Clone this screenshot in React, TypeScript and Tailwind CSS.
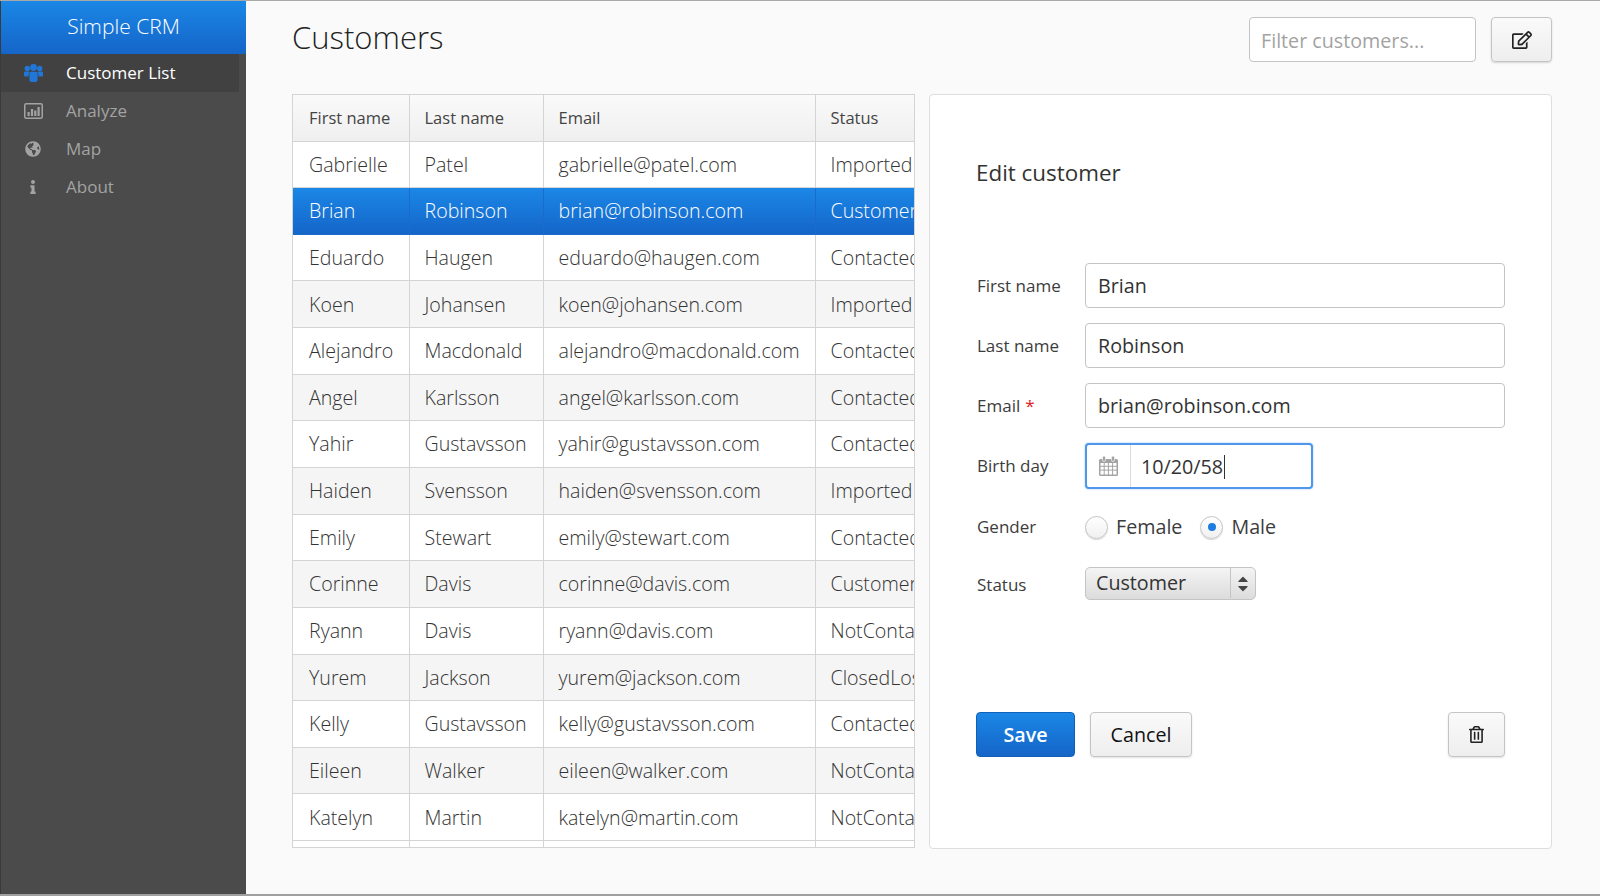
import { FaGlobeAmericas, FaInfo, FaRegEdit, FaRegTrashAlt, FaCaretUp, FaCaretDown } from 'react-icons/fa';

const font = "font-['Open_Sans','Noto_Sans',sans-serif]";

const customers = [
  ['Gabrielle', 'Patel', 'gabrielle@patel.com', 'Imported'],
  ['Brian', 'Robinson', 'brian@robinson.com', 'Customer'],
  ['Eduardo', 'Haugen', 'eduardo@haugen.com', 'Contacted'],
  ['Koen', 'Johansen', 'koen@johansen.com', 'Imported'],
  ['Alejandro', 'Macdonald', 'alejandro@macdonald.com', 'Contacted'],
  ['Angel', 'Karlsson', 'angel@karlsson.com', 'Contacted'],
  ['Yahir', 'Gustavsson', 'yahir@gustavsson.com', 'Contacted'],
  ['Haiden', 'Svensson', 'haiden@svensson.com', 'Imported'],
  ['Emily', 'Stewart', 'emily@stewart.com', 'Contacted'],
  ['Corinne', 'Davis', 'corinne@davis.com', 'Customer'],
  ['Ryann', 'Davis', 'ryann@davis.com', 'NotContacted'],
  ['Yurem', 'Jackson', 'yurem@jackson.com', 'ClosedLost'],
  ['Kelly', 'Gustavsson', 'kelly@gustavsson.com', 'Contacted'],
  ['Eileen', 'Walker', 'eileen@walker.com', 'NotContacted'],
  ['Katelyn', 'Martin', 'katelyn@martin.com', 'NotContacted'],
];

function GroupIcon() {
  return (
    <svg width="19" height="18" viewBox="0 0 19 18" fill="currentColor">
      <circle cx="3.300" cy="4.500" r="2.700" />
      <circle cx="15.700" cy="4.500" r="2.700" />
      <circle cx="9.500" cy="3.500" r="3.400" />
      <path d="M0 8.800C0 8 .6 7.500 1.400 7.500h3.200c.5 0 .9.200 1.200.500C5 8.800 4.600 10 4.600 11.300v1.200H1.400C.6 12.500 0 12 0 11.200z" />
      <path d="M19 8.800c0-.8-.6-1.300-1.400-1.300h-3.200c-.5 0-.9.200-1.200.500.8.800 1.200 2 1.200 3.300v1.200h3.200c.8 0 1.400-.5 1.400-1.300z" />
      <path d="M7.300 7.800h4.400c1.200 0 1.900.8 1.900 2v6.300c0 1-.8 1.900-1.900 1.900H7.300c-1.100 0-1.900-.9-1.900-1.900V9.800c0-1.200.7-2 1.900-2z" />
    </svg>
  );
}

function ChartIcon() {
  return (
    <svg width="19" height="16" viewBox="0 0 19 16" fill="currentColor">
      <rect x="0.750" y="0.750" width="17.500" height="14.500" rx="1.500" fill="none" stroke="currentColor" strokeWidth="1.500" />
      <rect x="3.500" y="9" width="2.200" height="4" />
      <rect x="6.900" y="6" width="2.200" height="7" />
      <rect x="10.200" y="7.500" width="2.200" height="5.500" />
      <rect x="13.500" y="4" width="2.200" height="9" />
    </svg>
  );
}

function CalendarIcon() {
  return (
    <svg width="19" height="20" viewBox="0 0 19 20" fill="#a3a3a3">
      <path d="M1.500 3h16a1.500 1.500 0 0 1 1.500 1.500V18.500a1.500 1.500 0 0 1-1.500 1.500h-16A1.500 1.500 0 0 1 0 18.500V4.500A1.500 1.500 0 0 1 1.500 3z" />
      <rect x="1.500" y="7" width="3.200" height="2.800" fill="#fff" />
      <rect x="5.700" y="7" width="3.200" height="2.800" fill="#fff" />
      <rect x="9.900" y="7" width="3.200" height="2.800" fill="#fff" />
      <rect x="14.100" y="7" width="3.400" height="2.800" fill="#fff" />
      <rect x="1.500" y="10.800" width="3.200" height="2.800" fill="#fff" />
      <rect x="5.700" y="10.800" width="3.200" height="2.800" fill="#fff" />
      <rect x="9.900" y="10.800" width="3.200" height="2.800" fill="#fff" />
      <rect x="14.100" y="10.800" width="3.400" height="2.800" fill="#fff" />
      <rect x="1.500" y="14.600" width="3.200" height="3.900" fill="#fff" />
      <rect x="5.700" y="14.600" width="3.200" height="3.900" fill="#fff" />
      <rect x="9.900" y="14.600" width="3.200" height="3.900" fill="#fff" />
      <rect x="14.100" y="14.600" width="3.400" height="3.900" fill="#fff" />
      <rect x="3.500" y="0" width="3" height="5.500" rx="1.500" stroke="#fff" strokeWidth="0.600" />
      <rect x="12.500" y="0" width="3" height="5.500" rx="1.500" stroke="#fff" strokeWidth="0.600" />
    </svg>
  );
}

function NavItem({ icon, label, active }: { icon: React.ReactNode; label: string; active?: boolean }) {
  return (
    <div className={`mr-[7px] flex h-[38px] items-center ${active ? 'bg-[#414141] font-medium text-white' : 'text-[#a3a3a3]'}`}>
      <span className={`flex w-[65px] shrink-0 items-center justify-center pr-[1px] ${active ? 'text-[#2176d6]' : 'text-[#a3a3a3]'}`}>{icon}</span>
      <span className="text-[17px]">{label}</span>
    </div>
  );
}

function Field({ label, value, required }: { label: string; value: string; required?: boolean }) {
  return (
    <div className="flex h-[45px] items-center">
      <label className="w-[109px] pl-[1px] text-[17px] text-[#3c3c3c]">
        {label}
        {required && <span className="ml-[5px] text-[#e02020]">*</span>}
      </label>
      <div className="flex h-[45px] flex-1 items-center rounded-[4px] border border-[#c4c4c4] bg-white px-[12px] text-[19.7px] text-[#333]">{value}</div>
    </div>
  );
}

function Radio({ label, checked }: { label: string; checked?: boolean }) {
  return (
    <div className="flex items-center gap-[8px]">
      <span className="flex h-[23px] w-[23px] items-center justify-center rounded-full border border-[#c4c4c4] bg-gradient-to-b from-white to-[#f0f0f0] shadow-[0_1px_1px_rgba(0,0,0,0.15)]">
        {checked && <span className="h-[8px] w-[8px] rounded-full bg-[#1b7de0]" />}
      </span>
      <span className="text-[19.7px] text-[#3c3c3c]">{label}</span>
    </div>
  );
}

export default function App() {
  return (
    <div className={`${font} flex h-[896px] w-[1600px] overflow-hidden border-t border-b-2 border-t-[#a8a8a8] border-b-[#a0a0a0] bg-[#fafafa]`}>
      <aside className="w-[246px] shrink-0 border-l border-[#3a3a3a] bg-[#4b4b4b]">
        <div className="flex h-[53px] items-center justify-center bg-gradient-to-b from-[#1b87e6] to-[#1565c8] pb-[1px] text-[21px] font-light text-white">Simple CRM</div>
        <NavItem active icon={<GroupIcon />} label="Customer List" />
        <NavItem icon={<ChartIcon />} label="Analyze" />
        <NavItem icon={<FaGlobeAmericas size={16} />} label="Map" />
        <NavItem icon={<FaInfo size={14} />} label="About" />
      </aside>

      <main className="flex min-w-0 flex-1 flex-col pt-[16px] pr-[48px] pl-[46px]">
        <div className="flex h-[46px] items-start">
          <h1 className="flex-1 text-[31px] leading-[40px] font-light text-[#222]">Customers</h1>
          <div className="flex h-[45px] w-[227px] items-center rounded-[4px] border border-[#c4c4c4] bg-white px-[11px] pt-[2px] text-[19.7px] text-[#a3a3a3]">Filter customers...</div>
          <button className="ml-[15px] flex h-[45px] w-[61px] items-center justify-center rounded-[4px] border border-[#c4c4c4] bg-gradient-to-b from-[#fafafa] to-[#eeeeee] shadow-[0_1px_2px_rgba(0,0,0,0.15)]">
            <FaRegEdit size={20} className="text-[#222]" />
          </button>
        </div>

        <div className="mt-[31px] flex h-[755px] gap-[14px]">
          <div className="h-[754px] w-[623px] shrink-0 overflow-hidden border border-[#d4d4d4] bg-white">
            <table className="w-[621px] table-fixed border-collapse">
              <colgroup>
                <col className="w-[116px]" />
                <col className="w-[134px]" />
                <col className="w-[272px]" />
                <col className="w-[99px]" />
              </colgroup>
              <thead>
                <tr className="h-[46px] bg-gradient-to-b from-[#fafafa] to-[#efefef] text-[16.5px] text-[#444]">
                  {['First name', 'Last name', 'Email', 'Status'].map((h, i) => (
                    <th key={h} className={`overflow-hidden border-r border-b border-[#d4d4d4] pt-[2px] text-left font-normal whitespace-nowrap last:border-r-0 ${i === 0 ? 'pl-[16px]' : 'pl-[15px]'}`}>{h}</th>
                  ))}
                </tr>
              </thead>
              <tbody>
                {customers.map((row, i) => {
                  const selected = i === 1;
                  return (
                    <tr key={row[2]} className={`h-[46.65px] text-[19.6px] font-light ${selected ? 'bg-gradient-to-b from-[#1b87e6] to-[#1565c8] text-white' : i % 2 === 0 ? 'bg-white text-[#333]' : 'bg-[#f5f5f5] text-[#333]'}`}>
                      {row.map((cell, j) => (
                        <td key={cell} className={`overflow-hidden border-r border-b whitespace-nowrap last:border-r-0 ${j === 0 ? 'pl-[16px]' : 'pl-[15px]'} ${selected ? 'border-[#1a6cc8]' : 'border-[#d4d4d4]'}`}>{cell}</td>
                      ))}
                    </tr>
                  );
                })}
                <tr className="h-[40px]">
                  <td className="border-r border-[#d4d4d4]" />
                  <td className="border-r border-[#d4d4d4]" />
                  <td className="border-r border-[#d4d4d4]" />
                  <td />
                </tr>
              </tbody>
            </table>
          </div>

          <section className="flex h-[755px] min-w-0 flex-1 flex-col rounded-[4px] border border-[#dedede] bg-white px-[46px] pt-[60px]">
            <h2 className="text-[22.4px] leading-[36px] font-normal text-[#333]">Edit customer</h2>
            <div className="mt-[72px] flex flex-col gap-[15.2px]">
              <Field label="First name" value="Brian" />
              <Field label="Last name" value="Robinson" />
              <Field label="Email" value="brian@robinson.com" required />
              <div className="flex h-[45px] items-center">
                <label className="w-[109px] pl-[1px] text-[17px] text-[#3c3c3c]">Birth day</label>
                <div className="flex h-[46px] w-[228px] items-center rounded-[4px] border-2 border-[#4f97ea] bg-white shadow-[0_0_2px_rgba(79,151,234,0.6)]">
                  <span className="flex h-full w-[44px] items-center justify-center border-r border-[#dcdcdc]"><CalendarIcon /></span>
                  <span className="flex items-center pt-[1px] pl-[10px] text-[19.7px] text-[#333]">10/20/58<span className="ml-[1px] h-[24px] w-[1px] bg-[#333]" /></span>
                </div>
              </div>
            </div>
            <div className="mt-[16px] flex h-[45px] items-center">
              <label className="w-[109px] pl-[1px] text-[17px] text-[#3c3c3c]">Gender</label>
              <div className="flex items-center gap-[18px]">
                <Radio label="Female" />
                <Radio label="Male" checked />
              </div>
            </div>
            <div className="mt-[17px] flex h-[34px] items-center">
              <label className="w-[109px] pt-[3px] pl-[1px] text-[17px] text-[#3c3c3c]">Status</label>
              <div className="flex h-[33px] w-[171px] items-center rounded-[5px] border border-[#c4c4c4] bg-gradient-to-b from-[#f4f4f4] to-[#dcdcdc] pb-[1px] text-[19.7px] text-[#333]">
                <span className="flex-1 pl-[10px]">Customer</span>
                <span className="flex h-full w-[25px] flex-col items-center justify-center border-l border-[#c4c4c4] leading-none text-[#444]">
                  <FaCaretUp size={16} className="-mb-[6px]" />
                  <FaCaretDown size={16} className="-mt-[1px]" />
                </span>
              </div>
            </div>
            <div className="mt-[111px] flex h-[45px] items-stretch">
              <button className="w-[99px] rounded-[4px] border border-[#1160b8] bg-gradient-to-b from-[#1b87e6] to-[#1565c8] pt-[1px] text-[19.7px] font-semibold text-white">Save</button>
              <button className="ml-[15px] w-[102px] rounded-[4px] border border-[#c4c4c4] bg-gradient-to-b from-[#fafafa] to-[#eeeeee] pt-[1px] text-[19.7px] text-[#111] shadow-[0_1px_2px_rgba(0,0,0,0.12)]">Cancel</button>
              <button className="ml-auto flex w-[57px] items-center justify-center rounded-[4px] border border-[#c4c4c4] bg-gradient-to-b from-[#fafafa] to-[#eeeeee] shadow-[0_1px_2px_rgba(0,0,0,0.12)]">
                <FaRegTrashAlt size={17} className="text-[#222]" />
              </button>
            </div>
          </section>
        </div>
      </main>
    </div>
  );
}
